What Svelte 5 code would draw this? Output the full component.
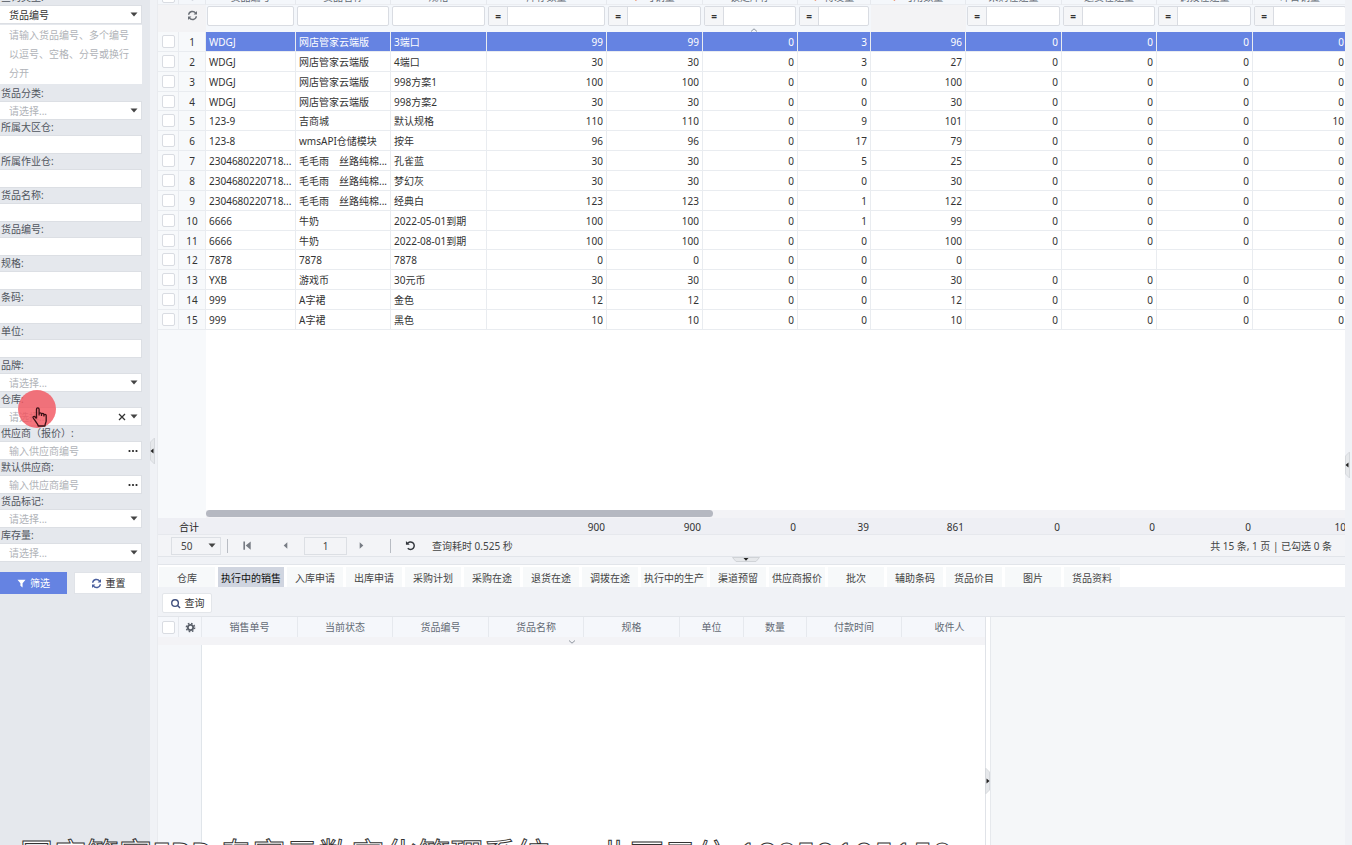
<script>
  const fields = [
    { label: '货品分类:', type: 'select' },
    { label: '所属大区仓:', type: 'text' },
    { label: '所属作业仓:', type: 'text' },
    { label: '货品名称:', type: 'text' },
    { label: '货品编号:', type: 'text' },
    { label: '规格:', type: 'text' },
    { label: '条码:', type: 'text' },
    { label: '单位:', type: 'text' },
    { label: '品牌:', type: 'select' },
    { label: '仓库:', type: 'select', clearable: true },
    { label: '供应商（报价）:', type: 'picker' },
    { label: '默认供应商:', type: 'picker' },
    { label: '货品标记:', type: 'select' },
    { label: '库存量:', type: 'select' }
  ];

  const columns = [
    { name: '货品编号', width: 90, filter: 'text' },
    { name: '货品名称', width: 95, filter: 'text' },
    { name: '规格', width: 96, filter: 'text' },
    { name: '库存数量', width: 120, filter: 'num' },
    { name: '可销量', width: 96, filter: 'num', mark: true },
    { name: '锁定库存', width: 95, filter: 'num' },
    { name: '待发量', width: 73, filter: 'num', mark: true },
    { name: '可用数量', width: 95, filter: 'none', mark: true },
    { name: '采购在途量', width: 96, filter: 'num' },
    { name: '退货在途量', width: 95, filter: 'num' },
    { name: '调拨在途量', width: 96, filter: 'num' },
    { name: '昨日销量', width: 95, filter: 'num' }
  ];

  const rows = [
    ['WDGJ', '网店管家云端版', '3端口', 99, 99, 0, 3, 96, 0, 0, 0, 0],
    ['WDGJ', '网店管家云端版', '4端口', 30, 30, 0, 3, 27, 0, 0, 0, 0],
    ['WDGJ', '网店管家云端版', '998方案1', 100, 100, 0, 0, 100, 0, 0, 0, 0],
    ['WDGJ', '网店管家云端版', '998方案2', 30, 30, 0, 0, 30, 0, 0, 0, 0],
    ['123-9', '吉商城', '默认规格', 110, 110, 0, 9, 101, 0, 0, 0, 10],
    ['123-8', 'wmsAPI仓储模块', '按年', 96, 96, 0, 17, 79, 0, 0, 0, 0],
    ['2304680220718...', '毛毛雨　丝路纯棉...', '孔雀蓝', 30, 30, 0, 5, 25, 0, 0, 0, 0],
    ['2304680220718...', '毛毛雨　丝路纯棉...', '梦幻灰', 30, 30, 0, 0, 30, 0, 0, 0, 0],
    ['2304680220718...', '毛毛雨　丝路纯棉...', '经典白', 123, 123, 0, 1, 122, 0, 0, 0, 0],
    ['6666', '牛奶', '2022-05-01到期', 100, 100, 0, 1, 99, 0, 0, 0, 0],
    ['6666', '牛奶', '2022-08-01到期', 100, 100, 0, 0, 100, 0, 0, 0, 0],
    ['7878', '7878', '7878', 0, 0, 0, 0, 0, '', '', '', 0],
    ['YXB', '游戏币', '30元币', 30, 30, 0, 0, 30, 0, 0, 0, 0],
    ['999', 'A字裙', '金色', 12, 12, 0, 0, 12, 0, 0, 0, 0],
    ['999', 'A字裙', '黑色', 10, 10, 0, 0, 10, 0, 0, 0, 0]
  ];

  const totals = ['', '', '', 900, 900, 0, 39, 861, 0, 0, 0, 10];

  const tabs = [
    '仓库', '执行中的销售', '入库申请', '出库申请', '采购计划', '采购在途', '退货在途', '调拨在途',
    '执行中的生产', '渠道预留', '供应商报价', '批次', '辅助条码', '货品价目', '图片', '货品资料'
  ];

  const detailColumns = [
    { name: '销售单号', width: 96 },
    { name: '当前状态', width: 95 },
    { name: '货品编号', width: 96 },
    { name: '货品名称', width: 95 },
    { name: '规格', width: 96 },
    { name: '单位', width: 64 },
    { name: '数量', width: 63 },
    { name: '付款时间', width: 95 },
    { name: '收件人', width: 96 }
  ];

  let selected = $state(0);
  let activeTab = $state('执行中的销售');
</script>

{#snippet caret()}
  <svg class="caret" viewBox="0 0 8 5" aria-hidden="true"><path d="M0.5 0.5h7L4 4.5z" fill="#444" /></svg>
{/snippet}

{#snippet refresh(color)}
  <svg class="ico" viewBox="0 0 12 12" fill="none" stroke={color} stroke-width="1.6" aria-hidden="true">
    <path d="M1.8 5.2A4.2 4.2 0 0 1 9.4 3.4M10.2 6.8A4.2 4.2 0 0 1 2.6 8.6" />
    <path d="M10.9 1v3.8H7.2zM1.1 11V7.2h3.7z" fill={color} stroke="none" />
  </svg>
{/snippet}

{#snippet cols()}
  <colgroup>
    <col style="width: 21px" />
    <col style="width: 27px" />
    {#each columns as c}
      <col style="width: {c.width}px" />
    {/each}
  </colgroup>
{/snippet}

<div class="app">
  <aside>
    <form class="search" onsubmit={(e) => e.preventDefault()}>
      <label class="first" for="kind">查询类型:</label>
      <div class="control">
        <select id="kind"><option>货品编号</option></select>
        {@render caret()}
      </div>
      <textarea aria-label="货品编号列表" placeholder="请输入货品编号、多个编号以逗号、空格、分号或换行分开"></textarea>

      {#each fields as f, i}
        <label for="f{i}">{f.label}</label>
        <div class="control">
          {#if f.type === 'select'}
            <select id="f{i}" class="empty"><option>请选择...</option></select>
            {#if f.clearable}
              <button type="button" class="clear" aria-label="清空">
                <svg viewBox="0 0 8 8" stroke="#333" stroke-width="1.3"><path d="M1 1l6 6M7 1L1 7" /></svg>
              </button>
            {/if}
            {@render caret()}
          {:else if f.type === 'picker'}
            <input id="f{i}" type="text" placeholder="输入供应商编号" />
            <button type="button" class="more" aria-label="选择供应商">
              <svg viewBox="0 0 10 4" fill="#222"><circle cx="1.5" cy="2" r="1.1" /><circle cx="5" cy="2" r="1.1" /><circle cx="8.5" cy="2" r="1.1" /></svg>
            </button>
          {:else}
            <input id="f{i}" type="text" />
          {/if}
        </div>
      {/each}

      <div class="actions">
        <button type="submit" class="primary">
          <svg class="funnel" viewBox="0 0 10 10" fill="#fff" aria-hidden="true"><path d="M0.5 0.8h9L6.2 4.8v4.6L3.8 7.6V4.8z" /></svg>
          筛选
        </button>
        <button type="reset">{@render refresh('#4a5f9e')} 重置</button>
      </div>
    </form>
  </aside>

  <div class="gutter">
    <svg class="handle" viewBox="0 0 6 26" aria-hidden="true"><path d="M5.5 0v26L1.5 22V4z" fill="#e6e8eb" stroke="#d6d9dd" /><path d="M4.5 10.5v5L1.5 13z" fill="#222" /></svg>
  </div>

  <main>
    <section class="stock">
      <div class="grid-area">
        <table class="grid head">
          {@render cols()}
          <thead>
            <tr class="names">
              <th><input type="checkbox" aria-label="全选" /></th>
              <th><svg class="gear" viewBox="0 0 12 12" aria-hidden="true"><circle cx="6" cy="6" r="3" fill="none" stroke="#6b7280" stroke-width="2" /></svg></th>
              {#each columns as c}
                <th>{#if c.mark}<span class="mark">?</span>{/if}{c.name}</th>
              {/each}
            </tr>
            <tr class="filters">
              <td></td>
              <td>{@render refresh('#6a6f76')}</td>
              {#each columns as c}
                <td class:blank={c.filter === 'none'}>
                  {#if c.filter !== 'none'}
                    <div class="filter">
                      {#if c.filter === 'num'}<button type="button">=</button>{/if}
                      <input type="text" aria-label={c.name} />
                    </div>
                  {/if}
                </td>
              {/each}
            </tr>
          </thead>
        </table>
        <svg class="fold" viewBox="0 0 8 4" fill="none" stroke="#8d949e" aria-hidden="true"><path d="M1 3.5L4 0.8L7 3.5" /></svg>

        <div class="rows">
          <table class="grid body">
            {@render cols()}
            <tbody>
              {#each rows as row, i}
                <tr class:selected={i === selected} onclick={() => (selected = i)}>
                  <td class="fixed"><input type="checkbox" aria-label="选择第{i + 1}行" /></td>
                  <td class="fixed no">{i + 1}</td>
                  {#each row as cell, j}
                    <td class:num={j > 2}>{cell}</td>
                  {/each}
                </tr>
              {/each}
            </tbody>
          </table>
        </div>

        <div class="scrollbar"><div class="thumb"></div></div>

        <table class="grid total">
          {@render cols()}
          <tbody>
            <tr>
              <th colspan="2" scope="row">合计</th>
              {#each totals as t}
                <td class="num">{t}</td>
              {/each}
            </tr>
          </tbody>
        </table>
      </div>

      <div class="pager">
        <div class="size">
          <select aria-label="每页条数"><option>50</option></select>
          {@render caret()}
        </div>
        <i></i>
        <button type="button" aria-label="首页"><svg class="ico" viewBox="0 0 12 12" fill="#777c84"><path d="M1.5 1.5h1.8v9H1.500zM9.5 1.5v9L4 6z" /></svg></button>
        <button type="button" aria-label="上一页"><svg class="ico" viewBox="0 0 12 12" fill="#777c84"><path d="M8 2.5v7L4 6z" /></svg></button>
        <input class="page" type="text" value="1" aria-label="页码" />
        <button type="button" class="next" aria-label="下一页"><svg class="ico" viewBox="0 0 12 12" fill="#777c84"><path d="M4 2.5v7l4-3.5z" /></svg></button>
        <i class="wide"></i>
        <button type="button" aria-label="刷新">
          <svg class="ico" viewBox="0 0 12 12" fill="none" stroke="#33373d" stroke-width="1.6"><path d="M2.5 4A4.1 4.1 0 1 1 3 9" /><path d="M1 1v4.2h4.2z" fill="#33373d" stroke="none" /></svg>
        </button>
        <span>查询耗时 0.525 秒</span>
        <span class="count">共 15 条, 1 页 | 已勾选 0 条</span>
      </div>
    </section>

    <div class="divider">
      <svg viewBox="0 0 28 5" aria-hidden="true"><path d="M0.5 0.5h27L24 4.5H4z" fill="#e6e8eb" stroke="#d0d3d7" /><path d="M11.5 1h5L14 3.8z" fill="#222" /></svg>
    </div>

    <section class="detail">
      <nav class="tabs">
        {#each tabs as tab}
          <button type="button" class:active={tab === activeTab} onclick={() => (activeTab = tab)}>{tab}</button>
        {/each}
      </nav>
      <div class="toolbar">
        <button type="button">
          <svg class="ico" viewBox="0 0 12 12" fill="none" stroke="#3f4f7d" stroke-width="1.5" aria-hidden="true"><circle cx="5.5" cy="5.5" r="3.6" /><path d="M8 8l3 3" /></svg>
          查询
        </button>
      </div>
      <div class="panes">
        <div class="orders">
          <table class="grid">
            <colgroup>
              <col style="width: 21px" />
              <col style="width: 23px" />
              {#each detailColumns as c}
                <col style="width: {c.width}px" />
              {/each}
            </colgroup>
            <thead>
              <tr>
                <th><input type="checkbox" aria-label="全选" /></th>
                <th>
                  <svg class="gear" viewBox="0 0 12 12" fill="none" stroke="#5b616b" aria-hidden="true">
                    <circle cx="6" cy="6" r="2.9" stroke-width="2" />
                    <circle cx="6" cy="6" r="4.5" stroke-width="1.6" stroke-dasharray="1.8 1.734" />
                  </svg>
                </th>
                {#each detailColumns as c}
                  <th>{c.name}</th>
                {/each}
              </tr>
            </thead>
          </table>
          <div class="strip">
            <svg viewBox="0 0 8 4" fill="none" stroke="#8d949e" aria-hidden="true"><path d="M1 0.5L4 3.2L7 0.5" /></svg>
          </div>
          <div class="empty-body"></div>
        </div>
        <div class="vsplit">
          <svg class="handle" viewBox="0 0 6 26" aria-hidden="true"><path d="M0.5 0v26L4.5 22V4z" fill="#e6e8eb" stroke="#d6d9dd" /><path d="M1.5 10.5v5L4.5 13z" fill="#222" /></svg>
        </div>
        <div class="side"></div>
      </div>
    </section>
  </main>

  <div class="gutter right">
    <svg class="handle" viewBox="0 0 6 26" aria-hidden="true"><path d="M5.5 0v26L1.5 22V4z" fill="#e6e8eb" stroke="#d6d9dd" /><path d="M4.5 10.5v5L1.5 13z" fill="#222" /></svg>
  </div>

  <div class="pointer">
    <svg viewBox="0 0 16 20" aria-hidden="true">
      <path d="M4.5 11.5V2.2a1.3 1.3 0 0 1 2.6 0V8M7.1 8.5V7a1.2 1.2 0 0 1 2.4 0v2M9.5 9V7.6a1.2 1.2 0 0 1 2.4 0V9.5M11.9 9.5V8.6a1.1 1.1 0 0 1 2.3 0v5.2c0 1.6-1.2 2.6-1.2 5.2H6.2c0-1.8-1.6-2.8-2.6-4.6L1.2 11c-.6-1.4 1-2.2 2-1l1.3 1.5" fill="none" stroke="#3a1015" stroke-width="1.3" stroke-linejoin="round" />
    </svg>
  </div>

  <div class="caption"><span>网店管家ERP 专家云数字化管理系统</span><span>业丽云信 <b>18059195150</b></span></div>
</div>

<style>
  :global(body) {
    margin: 0;
    overflow: hidden;
  }

  .app {
    position: relative;
    display: grid;
    grid-template-columns: 150px 8px minmax(0, 1fr) 7px;
    height: 100vh;
    overflow: hidden;
    background: #f0f2f6;
    color: #333;
    font-family: "Noto Sans", "Noto Sans CJK SC", sans-serif;
    font-size: 10px;
    line-height: 14px;
  }

  .app * {
    box-sizing: border-box;
  }

  button,
  input,
  select,
  textarea {
    font: inherit;
    color: inherit;
    margin: 0;
    padding: 0;
    border: none;
    border-radius: 0;
    background: none;
    outline: none;
    appearance: none;
  }

  svg {
    display: block;
  }

  .ico {
    width: 11px;
    height: 11px;
  }

  .gear {
    width: 11px;
    height: 11px;
    margin: 0 auto;
  }

  .caret {
    width: 8px;
    height: 5px;
    pointer-events: none;
  }

  input[type="checkbox"] {
    display: block;
    width: 13px;
    height: 13px;
    margin: 0 auto;
    border: 1px solid #d9dce2;
    border-radius: 2px;
    background: #fff;
  }

  /* search form */
  aside {
    background: #e5e8ed;
    overflow: hidden;
  }

  .search {
    display: flex;
    flex-direction: column;
    width: 142px;
  }

  .search label {
    height: 15px;
    padding-left: 1px;
    line-height: 15px;
    color: #50555d;
  }

  .search .first {
    margin-top: -10px;
  }

  .control {
    display: flex;
    align-items: center;
    height: 19px;
    padding-right: 3px;
    background: #fff;
    border: 1px solid #dcdfe4;
    border-left: none;
  }

  .control select,
  .control input {
    flex: 1;
    min-width: 0;
    height: 17px;
    padding-left: 9px;
  }

  .control select.empty,
  ::placeholder {
    color: #b0b3b8;
    opacity: 1;
  }

  .clear {
    width: 8px;
    margin-right: 4px;
  }

  .more {
    width: 10px;
  }

  textarea {
    height: 59px;
    margin: 1px 0 2px;
    padding: 1px 9px 0;
    background: #fff;
    line-height: 19px;
    resize: none;
    overflow: hidden;
  }

  .actions {
    display: grid;
    grid-template-columns: 67px 68px;
    gap: 7px;
    margin-top: 10px;
  }

  .actions button {
    display: flex;
    align-items: center;
    justify-content: center;
    gap: 4px;
    height: 22px;
    background: #fff;
    border: 1px solid #e0e3e8;
  }

  .actions .primary {
    background: #6583e2;
    border-color: #6583e2;
    color: #fff;
  }

  .funnel {
    width: 9px;
    height: 9px;
  }

  /* splitters */
  .gutter {
    position: relative;
    border-right: 1px solid #e9ebef;
  }

  .handle {
    position: absolute;
    top: 438px;
    right: 2px;
    width: 6px;
    height: 26px;
  }

  .right {
    border: none;
  }

  .right .handle {
    top: 452px;
  }

  main {
    display: grid;
    grid-template-rows: minmax(0, 557fr) 8px minmax(0, 280fr);
    min-width: 0;
  }

  .stock {
    display: flex;
    flex-direction: column;
    min-height: 0;
    overflow: hidden;
  }

  .grid-area {
    position: relative;
    flex: 1;
    display: flex;
    flex-direction: column;
    min-height: 0;
    overflow: hidden;
  }

  .grid {
    flex: none;
    table-layout: fixed;
    border-collapse: separate;
    border-spacing: 0;
    white-space: nowrap;
  }

  .grid th,
  .grid td {
    padding: 0;
    font-weight: normal;
  }

  .stock .grid {
    width: 1190px;
  }

  .head {
    margin-top: -19px;
    background: #f4f7fb;
  }

  .names th {
    height: 24px;
    padding-top: 8px;
    color: #646b75;
    border-right: 1px solid #e6e9ee;
    border-bottom: 1px solid #ebedf1;
  }

  .mark {
    margin-right: 6px;
    color: #e9895f;
  }

  .filters td {
    height: 27px;
    padding: 1px 2px 6px 1px;
    vertical-align: top;
  }

  .filters td:nth-child(-n + 2),
  .filters .blank {
    background: #f3f3f5;
  }

  .filters .ico {
    margin: 4px auto 0;
  }

  .filter {
    display: flex;
    height: 20px;
    border: 1px solid #d9dce2;
    border-radius: 2px;
    background: #fff;
  }

  .filter button {
    flex: none;
    width: 19px;
    background: #f5f6f8;
    border-right: 1px solid #d9dce2;
    font-weight: bold;
  }

  .filter input {
    flex: 1;
    width: 0;
    min-width: 0;
  }

  .fold {
    position: absolute;
    top: 28px;
    left: 50%;
    width: 8px;
    height: 4px;
    transform: translateX(-2px);
  }

  .rows {
    flex: 1;
    min-height: 0;
    overflow: hidden;
    background: linear-gradient(to right, #f7f9fb 48px, #fff 48px);
  }

  .body {
    height: 298px;
  }

  .body td {
    padding: 1px 3px 0;
    border-right: 1px solid #e9ecf0;
    border-bottom: 1px solid #e9ecf0;
    overflow: hidden;
  }

  .body .fixed {
    padding: 0;
    background: #f7f9fb;
    text-align: center;
  }

  .body .no {
    padding-top: 1px;
  }

  .grid .num {
    text-align: right;
  }

  .selected td:not(.fixed) {
    background: #6583e2;
    color: #fff;
  }

  .scrollbar {
    flex: none;
    height: 8px;
    padding-left: 48px;
    background: linear-gradient(to right, #f7f9fb 48px, #f3f3f6 48px);
  }

  .thumb {
    width: 44.5%;
    height: 7px;
    border-radius: 4px;
    background: #b5b8c1;
  }

  .total {
    background: #eeeff4;
    border-bottom: 1px solid #e6e8ed;
  }

  .total th,
  .total td {
    height: 16px;
    padding: 1px 2px 0 0;
  }

  .total th {
    padding: 1px 0 0 14px;
    color: #222;
  }

  .pager {
    flex: none;
    display: flex;
    align-items: center;
    height: 22px;
    padding: 0 13px;
    background: #f3f4f7;
    border-bottom: 1px solid #e2e5ea;
    color: #444;
  }

  .size {
    display: flex;
    align-items: center;
    width: 50px;
    height: 18px;
    padding-right: 4px;
    border: 1px solid #dcdfe4;
  }

  .size select {
    flex: 1;
    min-width: 0;
    padding-left: 9px;
  }

  .pager i {
    width: 1px;
    height: 14px;
    margin-left: 6px;
    background: #b8bcc3;
  }

  .pager button {
    display: flex;
    justify-content: center;
    width: 38px;
  }

  .pager .next {
    width: 28px;
  }

  .pager .wide {
    margin-left: 15px;
  }

  .page {
    width: 43px;
    height: 18px;
    border: 1px solid #dcdfe4;
    text-align: center;
  }

  .pager span {
    margin-left: 3px;
  }

  .pager .count {
    margin-left: auto;
  }

  .divider {
    border-bottom: 1px solid #e2e5ea;
  }

  .divider svg {
    width: 28px;
    height: 5px;
    margin: 0 auto;
    transform: translateX(-6px);
  }

  .detail {
    display: flex;
    flex-direction: column;
    min-height: 0;
  }

  .tabs {
    flex: none;
    display: flex;
    gap: 3px;
    height: 22px;
    padding: 2px 1px 0;
    background: #fff;
    overflow: hidden;
  }

  .tabs button {
    flex: none;
    min-width: 56px;
    padding: 1px 3px 0;
    background: #f7f9fa;
    color: #444;
  }

  .tabs .active {
    background: #d0d5e0;
    color: #111;
  }

  .toolbar {
    flex: none;
    height: 30px;
    padding: 6px 4px;
    border-bottom: 1px solid #e2e5ea;
  }

  .toolbar button {
    display: flex;
    align-items: center;
    justify-content: center;
    gap: 4px;
    width: 50px;
    height: 20px;
    background: #fff;
    border: 1px solid #e3e6ea;
    border-radius: 2px;
  }

  .panes {
    flex: 1;
    display: grid;
    grid-template-columns: minmax(0, 828fr) 5px minmax(0, 354fr);
    min-height: 0;
  }

  .orders {
    display: flex;
    flex-direction: column;
    overflow: hidden;
    border-right: 1px solid #e0e3e8;
  }

  .orders .grid {
    width: 840px;
  }

  .orders th {
    height: 20px;
    background: #f5f7fb;
    border-right: 1px solid #e6e9ee;
    color: #646b75;
  }

  .strip {
    flex: none;
    height: 8px;
    padding-top: 3px;
    background: #f3f3f6;
  }

  .strip svg {
    width: 8px;
    height: 4px;
    margin: 0 auto;
  }

  .empty-body {
    flex: 1;
    background: linear-gradient(to right, #f5f7fa 43px, #e0e5ea 43px, #e0e5ea 44px, #fff 44px);
  }

  .vsplit {
    position: relative;
    background: #fff;
    border-right: 1px solid #e6e9ed;
  }

  .vsplit .handle {
    top: 151px;
    right: -1px;
  }

  .side {
    background: #f5f7f9;
  }

  /* click highlight and cursor over the page */
  .pointer {
    position: absolute;
    top: 390px;
    left: 18px;
    width: 38px;
    height: 38px;
    border-radius: 50%;
    background: rgba(242, 82, 92, 0.8);
    pointer-events: none;
  }

  .pointer svg {
    width: 16px;
    height: 20px;
    margin: 17px 0 0 14px;
  }

  .caption {
    position: absolute;
    top: 837px;
    left: 20px;
    display: flex;
    gap: 48px;
    color: #fff;
    font-size: 33px;
    line-height: 36px;
    white-space: nowrap;
    -webkit-text-stroke: 1px #333;
    pointer-events: none;
  }

  .caption b {
    font-size: 34px;
    font-weight: normal;
  }
</style>
